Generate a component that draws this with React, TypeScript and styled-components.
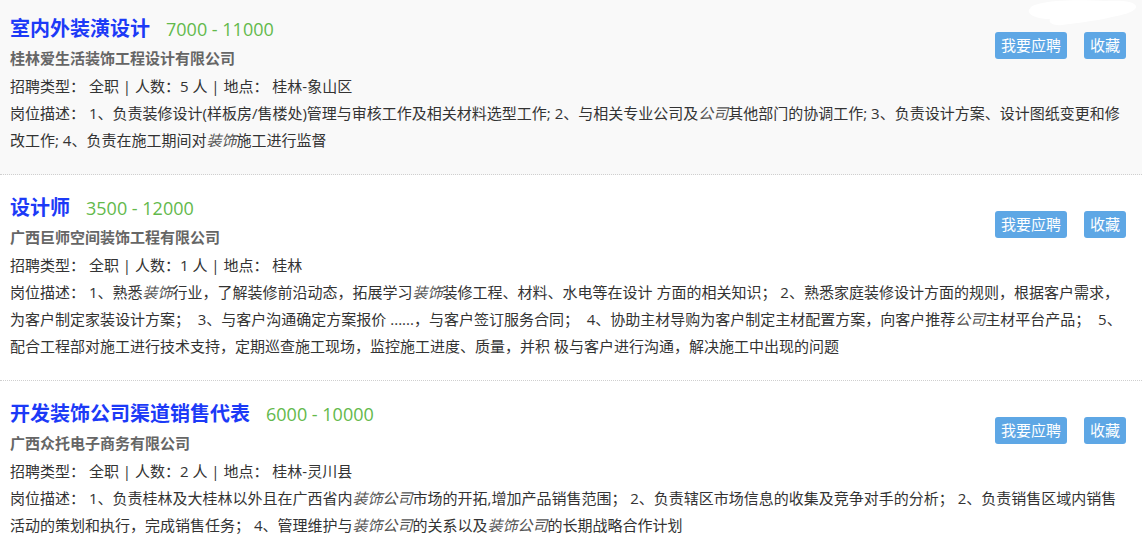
import React from "react";
import styled, { createGlobalStyle } from "styled-components";

const Global = createGlobalStyle`
  html, body { margin: 0; padding: 0; background: #fff; }
  body {
    font-family: "Open Sans", "Noto Sans CJK SC", "Liberation Sans", sans-serif;
    color: #333;
    overflow: hidden;
  }
`;

const Page = styled.div`
  position: relative;
  width: 1142px;
  margin-top: -4px;
`;

const Item = styled.div<{ $active?: boolean }>`
  padding: 18px 16px 20px 10px;
  background: ${(p) => (p.$active ? "#f9f9f9" : "#fff")};
  border-bottom: 1px dotted #cfcfcf;
  &::after { content: ""; display: block; clear: both; }
`;

const Actions = styled.div`
  float: right;
  display: flex;
  gap: 17px;
  margin-top: 18px;
`;

const Button = styled.button`
  height: 27px;
  padding: 0 6px;
  border: none;
  border-radius: 3px;
  background: #5ea7e5;
  color: #fff;
  font-family: inherit;
  font-size: 15px;
  line-height: 27px;
  cursor: pointer;
`;

const TitleRow = styled.div`
  display: flex;
  align-items: baseline;
  gap: 16px;
  height: 30px;
  line-height: 30px;
`;

const Title = styled.span`
  font-size: 20px;
  font-weight: 700;
  color: #1c3af7;
`;

const Salary = styled.span`
  font-size: 18px;
  color: #63b94c;
`;

const Company = styled.div`
  font-size: 15px;
  font-weight: 700;
  color: #666;
  line-height: 28px;
`;

const Meta = styled.div`
  font-size: 15px;
  line-height: 28px;
  color: #333;
`;

const Desc = styled.div`
  font-size: 15px;
  line-height: 27px;
  color: #333;
`;

const Em = styled.em`
  font-style: italic;
  color: #555;
`;

const Blob = styled.svg`
  position: absolute;
  top: 3px;
  right: 2px;
`;

type Job = {
  title: string;
  salary: string;
  company: string;
  count: number;
  place: string;
  desc: React.ReactNode;
};

const jobs: Job[] = [
  {
    title: "室内外装潢设计",
    salary: "7000 - 11000",
    company: "桂林爱生活装饰工程设计有限公司",
    count: 5,
    place: "桂林-象山区",
    desc: (
      <>
        1、负责装修设计(样板房/售楼处)管理与审核工作及相关材料选型工作; 2、与相关专业公司及<Em>公司</Em>其他部门的协调工作; 3、负责设计方案、设计图纸变更和修改工作; 4、负责在施工期间对<Em>装饰</Em>施工进行监督
      </>
    ),
  },
  {
    title: "设计师",
    salary: "3500 - 12000",
    company: "广西巨师空间装饰工程有限公司",
    count: 1,
    place: "桂林",
    desc: (
      <>
        1、熟悉<Em>装饰</Em>行业，了解装修前沿动态，拓展学习<Em>装饰</Em>装修工程、材料、水电等在设计 方面的相关知识； 2、熟悉家庭装修设计方面的规则，根据客户需求，为客户制定家装设计方案；&nbsp; 3、与客户沟通确定方案报价 ......，与客户签订服务合同；&nbsp; 4、协助主材导购为客户制定主材配置方案，向客户推荐<Em>公司</Em>主材平台产品；&nbsp; 5、配合工程部对施工进行技术支持，定期巡查施工现场，监控施工进度、质量，并积 极与客户进行沟通，解决施工中出现的问题
      </>
    ),
  },
  {
    title: "开发装饰公司渠道销售代表",
    salary: "6000 - 10000",
    company: "广西众托电子商务有限公司",
    count: 2,
    place: "桂林-灵川县",
    desc: (
      <>
        1、负责桂林及大桂林以外且在广西省内<Em>装饰公司</Em>市场的开拓,增加产品销售范围； 2、负责辖区市场信息的收集及竞争对手的分析； 2、负责销售区域内销售活动的策划和执行，完成销售任务； 4、管理维护与<Em>装饰公司</Em>的关系以及<Em>装饰公司</Em>的长期战略合作计划
      </>
    ),
  },
];

export default function App() {
  return (
    <>
      <Global />
      <Page>
        {jobs.map((j, i) => (
          <Item key={j.title} $active={i === 0}>
            <Actions>
              <Button>我要应聘</Button>
              <Button>收藏</Button>
            </Actions>
            <TitleRow>
              <Title>{j.title}</Title>
              <Salary>{j.salary}</Salary>
            </TitleRow>
            <Company>{j.company}</Company>
            <Meta>
              招聘类型： 全职 | 人数：{j.count} 人 | 地点： {j.place}
            </Meta>
            <Desc>岗位描述： {j.desc}</Desc>
          </Item>
        ))}
        <Blob width="116" height="28" viewBox="0 0 116 28">
          <path
            d="M14 5 C32 0 62 1 82 2 C100 1 114 3 112 9 C108 14 98 16 88 18 C72 22 52 24 38 26 C30 27 24 24 26 20 C14 20 3 16 5 11 C6 8 9 6 14 5 Z"
            fill="#fff"
          />
        </Blob>
      </Page>
    </>
  );
}
